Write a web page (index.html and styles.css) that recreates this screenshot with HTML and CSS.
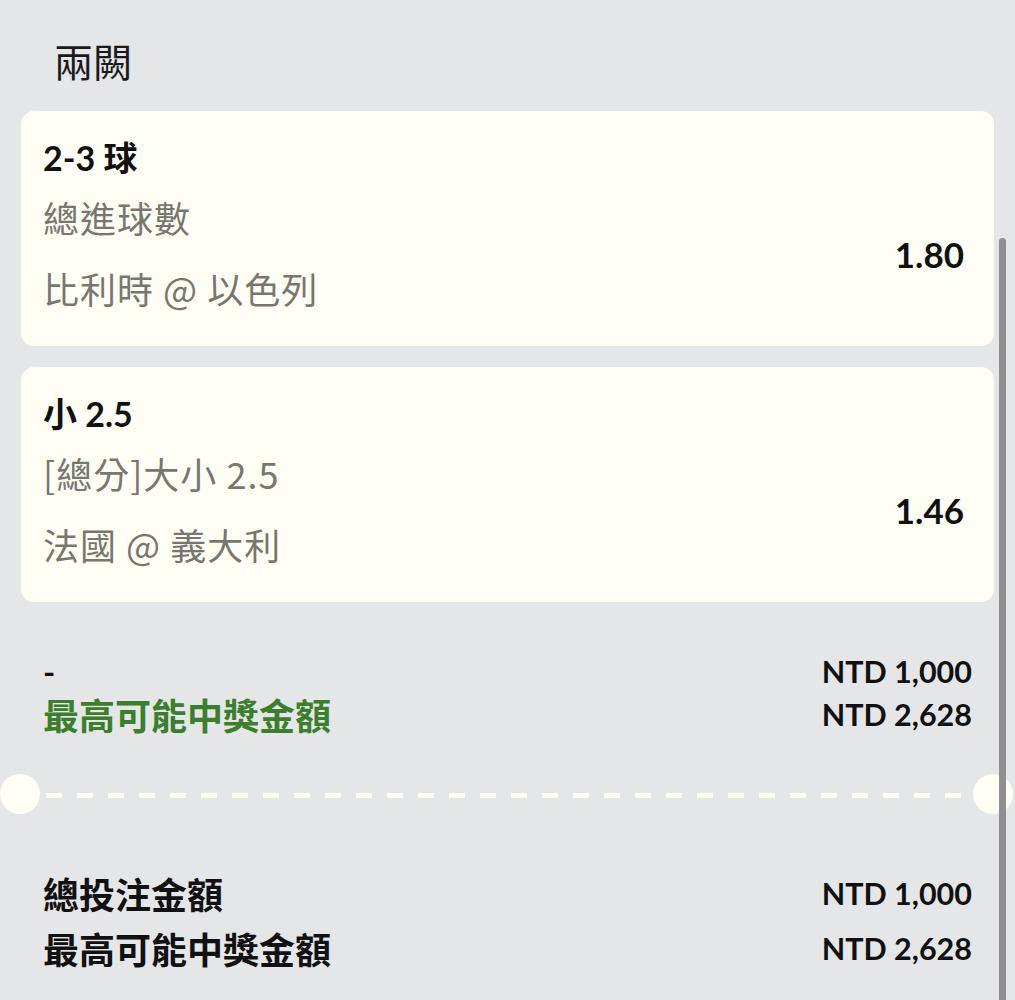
FILE: index.html
```html
<!DOCTYPE html>
<html lang="zh-Hant">
<head>
<meta charset="utf-8">
<title>兩闕</title>
<link rel="stylesheet" href="styles.css">
</head>
<body>
<div class="page">
  <h1 class="leg-title">兩闕</h1>

  <div class="card">
    <div class="sel">2-3 球</div>
    <div class="card-row">
      <div class="info">
        <div class="market">總進球數</div>
        <div class="match">比利時 @ 以色列</div>
      </div>
      <div class="odds">1.80</div>
    </div>
  </div>

  <div class="card">
    <div class="sel">小 2.5</div>
    <div class="card-row">
      <div class="info">
        <div class="market">[總分]大小 2.5</div>
        <div class="match">法國 @ 義大利</div>
      </div>
      <div class="odds">1.46</div>
    </div>
  </div>

  <div class="summary">
    <div class="s-label dash">-</div>
    <div class="s-value">NTD 1,000</div>
    <div class="s-label win">最高可能中獎金額</div>
    <div class="s-value">NTD 2,628</div>
  </div>
</div>

<div class="divider">
  <span class="notch"></span>
  <span class="dashes"></span>
  <span class="notch"></span>
</div>

<div class="page">
  <div class="totals">
    <div class="t-label">總投注金額</div>
    <div class="t-value">NTD 1,000</div>
    <div class="t-label">最高可能中獎金額</div>
    <div class="t-value">NTD 2,628</div>
  </div>
</div>

<div class="scrollbar"></div>
</body>
</html>
```

FILE: styles.css
```css
html, body {
  margin: 0;
  padding: 0;
}
body {
  background: #e5e6e8;
  font-family: "Lato", "Noto Sans CJK TC", sans-serif;
  color: #111;
  width: 1015px;
  height: 1000px;
  overflow: hidden;
  position: relative;
}
.page {
  padding: 0 21px;
}
.leg-title {
  margin: 0;
  padding: 35px 0 0 33px;
  font-family: "Noto Sans CJK TC", sans-serif;
  font-weight: 400;
  font-size: 39px;
  line-height: 50px;
  height: 50px;
  color: #1a1a1a;
}
.card {
  margin-top: 26px;
  background: #fffef5;
  border-radius: 13px;
  padding: 27px 30px 31px 22px;
}
.card + .card {
  margin-top: 21px;
}
.sel {
  font-family: "Lato", "Noto Sans CJK TC", sans-serif;
  font-weight: 700;
  font-size: 34px;
  line-height: 40px;
  height: 40px;
  color: #111;
}
.card-row {
  margin-top: 14px;
  display: flex;
  align-items: center;
  justify-content: space-between;
}
.info {
  padding-bottom: 2px;
}
.market, .match {
  font-family: "Noto Sans CJK TC", sans-serif;
  font-weight: 400;
  font-size: 36px;
  letter-spacing: 1px;
  line-height: 50px;
  height: 50px;
  color: #77776f;
}
.match {
  margin-top: 21px;
}
.odds {
  font-weight: 700;
  font-size: 35px;
  line-height: 40px;
  color: #111;
}
.summary {
  margin-top: 48px;
  padding: 0 22px;
  display: grid;
  grid-template-columns: 1fr auto;
  grid-auto-rows: 43px;
  align-items: center;
}
.s-label, .s-value, .t-label, .t-value {
  font-weight: 700;
  line-height: 43px;
}
.s-value, .t-value {
  font-size: 30.5px;
  text-align: right;
  color: #111;
}
.dash {
  font-size: 33px;
}
.win {
  font-family: "Noto Sans CJK TC", sans-serif;
  font-size: 36px;
  color: #3b7e2b;
}
.divider {
  margin-top: 38px;
  display: flex;
  align-items: center;
  height: 40px;
}
.notch {
  width: 40px;
  height: 40px;
  border-radius: 50%;
  background: #fffef5;
  flex: none;
}
.notch:last-child {
  margin-right: 2px;
}
.dashes {
  flex: 1;
  height: 5px;
  margin: 2px 5px 0 6px;
  background: repeating-linear-gradient(to right, #fffef5 0 16px, transparent 16px 31px);
}
.totals {
  margin-top: 52px;
  padding: 0 22px;
  display: grid;
  grid-template-columns: 1fr auto;
  grid-auto-rows: 55px;
  align-items: center;
}
.t-label {
  font-family: "Noto Sans CJK TC", sans-serif;
  font-size: 36px;
  color: #111;
}
.scrollbar {
  position: absolute;
  right: 9px;
  top: 238px;
  bottom: -10px;
  width: 7px;
  border-radius: 4px;
  background: #8f8f8f;
}
```
